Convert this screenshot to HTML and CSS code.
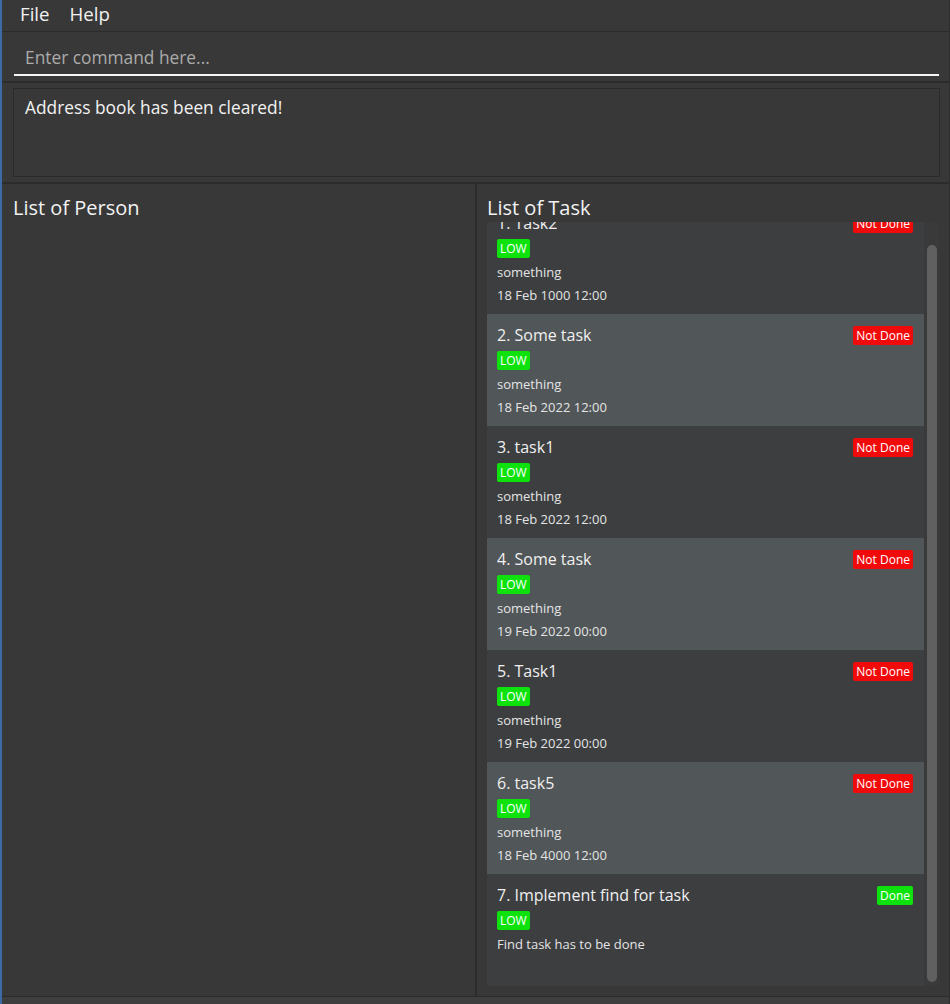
FILE: index.html
```html
<!DOCTYPE html>
<html>
<head>
<meta charset="utf-8">
<link rel="stylesheet" href="styles.css">
</head>
<body>
<div class="app">
  <div class="menubar">
    <span class="menu-item">File</span>
    <span class="menu-item">Help</span>
  </div>
  <div class="command-area">
    <div class="command-input">Enter command here...</div>
  </div>
  <div class="result-area">
    <div class="result-box">Address book has been cleared!</div>
  </div>
  <div class="panes">
    <div class="pane pane-left">
      <div class="pane-title">List of Person</div>
    </div>
    <div class="pane pane-right">
      <div class="pane-title">List of Task</div>
      <div class="list-view">
        <div class="list-inner">
          <div class="card odd">
            <div class="card-head"><span class="title">1. Task2</span><span class="status not-done">Not Done</span></div>
            <span class="priority">LOW</span>
            <div class="line">something</div>
            <div class="line">18 Feb 1000 12:00</div>
          </div>
          <div class="card even">
            <div class="card-head"><span class="title">2. Some task</span><span class="status not-done">Not Done</span></div>
            <span class="priority">LOW</span>
            <div class="line">something</div>
            <div class="line">18 Feb 2022 12:00</div>
          </div>
          <div class="card odd">
            <div class="card-head"><span class="title">3. task1</span><span class="status not-done">Not Done</span></div>
            <span class="priority">LOW</span>
            <div class="line">something</div>
            <div class="line">18 Feb 2022 12:00</div>
          </div>
          <div class="card even">
            <div class="card-head"><span class="title">4. Some task</span><span class="status not-done">Not Done</span></div>
            <span class="priority">LOW</span>
            <div class="line">something</div>
            <div class="line">19 Feb 2022 00:00</div>
          </div>
          <div class="card odd">
            <div class="card-head"><span class="title">5. Task1</span><span class="status not-done">Not Done</span></div>
            <span class="priority">LOW</span>
            <div class="line">something</div>
            <div class="line">19 Feb 2022 00:00</div>
          </div>
          <div class="card even">
            <div class="card-head"><span class="title">6. task5</span><span class="status not-done">Not Done</span></div>
            <span class="priority">LOW</span>
            <div class="line">something</div>
            <div class="line">18 Feb 4000 12:00</div>
          </div>
          <div class="card odd">
            <div class="card-head"><span class="title">7. Implement find for task</span><span class="status done">Done</span></div>
            <span class="priority">LOW</span>
            <div class="line">Find task has to be done</div>
          </div>
        </div>
        <div class="scrollbar"><div class="thumb"></div></div>
      </div>
    </div>
  </div>
  <div class="statusbar"></div>
</div>
</body>
</html>
```

FILE: styles.css
```css
* { box-sizing: border-box; }
html, body {
  margin: 0;
  padding: 0;
  background: #383838;
  font-family: "Open Sans", "Noto Sans", sans-serif;
  color: #f2f2f2;
}
.app {
  width: 950px;
  height: 1004px;
  overflow: hidden;
  display: flex;
  flex-direction: column;
  border-left: 2px solid #3b6ca6;
  border-right: 1px solid #2e2e2e;
  background: #383838;
}
.menubar {
  height: 32px;
  border-bottom: 1px solid #2b2b2b;
  display: flex;
  align-items: center;
  padding-left: 8px;
  font-size: 18.67px;
}
.menu-item {
  padding: 0 10px;
  line-height: 28px;
  margin-top: -3px;
}
.command-area {
  height: 51px;
  border-bottom: 2px solid #2b2b2b;
  padding: 7px 10px 0 12px;
}
.command-input {
  height: 37px;
  border-bottom: 2px solid #f5f5f5;
  padding-left: 11px;
  padding-top: 1px;
  font-size: 17.33px;
  line-height: 35px;
  color: #ababab;
}
.result-area {
  height: 101px;
  border-bottom: 2px solid #2b2b2b;
  padding: 5px 9px 0 11px;
}
.result-box {
  height: 89px;
  border: 1px solid #2a2a2a;
  padding: 6px 11px;
  font-size: 17.33px;
  line-height: 24px;
}
.panes {
  flex: 1;
  display: flex;
  border-bottom: 1px solid #2b2b2b;
  min-height: 0;
}
.pane {
  display: flex;
  flex-direction: column;
  padding-top: 11px;
  min-height: 0;
}
.pane-left {
  width: 475px;
  border-right: 2px solid #2b2b2b;
  padding-left: 11px;
}
.pane-right {
  flex: 1;
  padding-left: 10px;
  padding-right: 10px;
}
.pane-title {
  font-size: 20px;
  line-height: 26px;
  margin-bottom: 1px;
  color: #f2f2f2;
}
.list-view {
  position: relative;
  height: 764px;
  overflow: hidden;
  background: #3a3a3a;
  display: flex;
}
.list-inner {
  width: 437px;
  margin-top: -20px;
  background: #3c3e40;
}
.card {
  height: 112px;
  padding: 10px 11px 0 10px;
  display: flex;
  flex-direction: column;
  align-items: flex-start;
}
.card.odd { background: #3c3e40; }
.card.even { background: #515658; }
.card-head {
  width: 100%;
  height: 22px;
  display: flex;
  align-items: center;
  justify-content: space-between;
}
.title {
  font-size: 16px;
  color: #f0f0f0;
}
.status, .priority {
  font-size: 12px;
  color: #ffffff;
  height: 19px;
  line-height: 19px;
  padding: 0 3px;
  border-radius: 2px;
}
.not-done { background: #f00a0a; }
.done, .priority { background: #0de20d; }
.priority { margin-top: 5px; }
.line {
  font-size: 13px;
  line-height: 23px;
  color: #e4e4e4;
}
.priority + .line { margin-top: 3px; }
.scrollbar {
  flex: 1;
  padding: 23px 2px 4px 3px;
}
.thumb {
  height: 100%;
  width: 10px;
  background: #606060;
  border-radius: 5px;
}
.statusbar {
  height: 7px;
  background: #3e3e3e;
}
```
